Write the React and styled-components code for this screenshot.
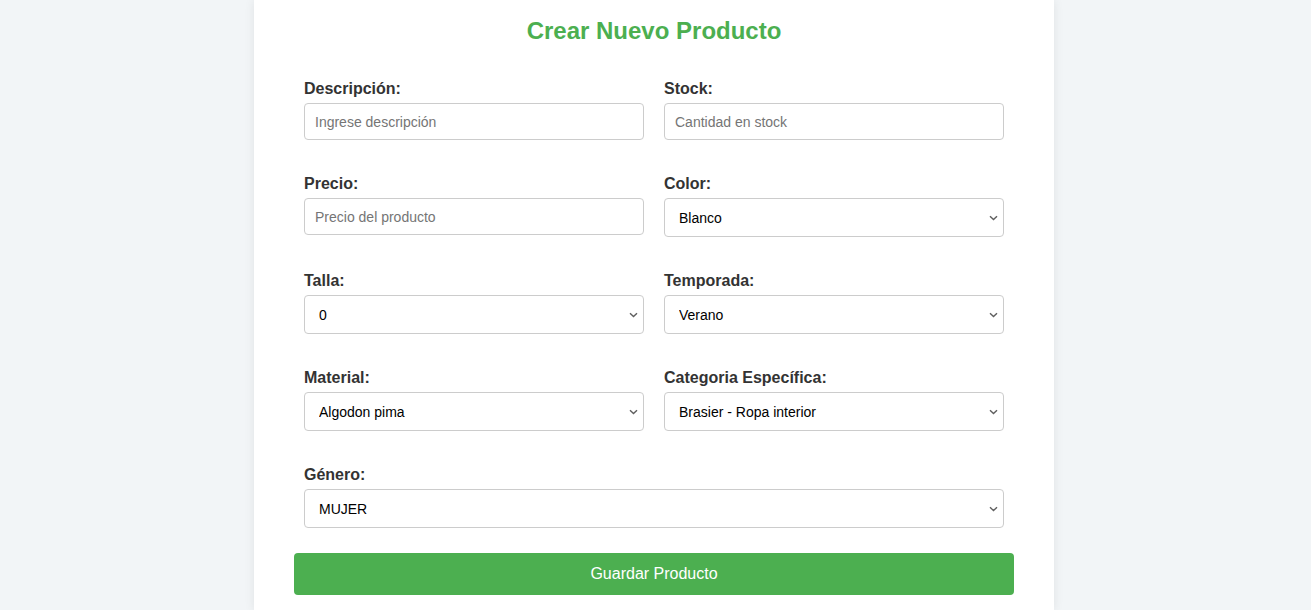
import React, { useState } from 'react';
import styled, { createGlobalStyle } from 'styled-components';

const GlobalStyle = createGlobalStyle`
  html, body {
    margin: 0;
    padding: 0;
    height: 100%;
    overflow: hidden;
    background: #f2f5f7;
    font-family: "Liberation Sans", Arial, sans-serif;
  }
`;

const Page = styled.div`
  display: flex;
  justify-content: center;
  min-height: 100vh;
  padding-right: 3px;
`;

const Card = styled.div`
  width: 800px;
  box-sizing: border-box;
  background: #ffffff;
  padding: 17px 40px 16px;
  box-shadow: 0 0 10px rgba(0, 0, 0, 0.08);
`;

const Title = styled.h2`
  margin: 0 0 35px;
  text-align: center;
  font-size: 24px;
  font-weight: bold;
  color: #4caf50;
`;

const Form = styled.form`
  display: flex;
  flex-direction: column;
`;

const Grid = styled.div`
  display: grid;
  grid-template-columns: 1fr 1fr;
  column-gap: 20px;
  row-gap: 35px;
  padding: 0 10px;
`;

const Group = styled.div`
  display: flex;
  flex-direction: column;
  grid-column: ${({ $full }) => ($full ? '1 / -1' : 'auto')};
`;

const Label = styled.label`
  display: block;
  font-size: 16px;
  font-weight: bold;
  color: #333;
  margin-bottom: 5px;
`;

const Input = styled.input`
  box-sizing: border-box;
  height: 37px;
  padding: 0 10px;
  border: 1px solid #ccc;
  border-radius: 4px;
  font-family: "Liberation Sans", Arial, sans-serif;
  font-size: 14px;
  color: #000;
  outline: none;

  &::placeholder {
    color: #757575;
  }
`;

const SelectWrap = styled.div`
  position: relative;
  display: flex;
`;

const Select = styled.select`
  flex: 1;
  box-sizing: border-box;
  height: 39px;
  padding: 0 24px 0 14px;
  border: 1px solid #ccc;
  border-radius: 4px;
  background: #fff;
  appearance: none;
  -webkit-appearance: none;
  font-family: "Liberation Sans", Arial, sans-serif;
  font-size: 14px;
  color: #000;
  outline: none;
`;

const Chevron = styled.svg`
  position: absolute;
  right: 6px;
  top: 50%;
  width: 9px;
  height: 6px;
  margin-top: -3px;
  pointer-events: none;
`;

const Button = styled.button`
  margin-top: 25px;
  height: 42px;
  border: none;
  border-radius: 4px;
  background: #4caf50;
  color: #fff;
  font-family: "Liberation Sans", Arial, sans-serif;
  font-size: 16px;
  cursor: pointer;
`;

const fields = [
  { name: 'descripcion', label: 'Descripción:', placeholder: 'Ingrese descripción' },
  { name: 'stock', label: 'Stock:', placeholder: 'Cantidad en stock' },
  { name: 'precio', label: 'Precio:', placeholder: 'Precio del producto' },
  { name: 'color', label: 'Color:', options: ['Blanco', 'Negro', 'Rojo', 'Azul'] },
  { name: 'talla', label: 'Talla:', options: ['0', '2', '4', '6', '8'] },
  { name: 'temporada', label: 'Temporada:', options: ['Verano', 'Invierno', 'Otoño', 'Primavera'] },
  { name: 'material', label: 'Material:', options: ['Algodon pima', 'Poliéster', 'Lino'] },
  { name: 'categoria', label: 'Categoria Específica:', options: ['Brasier - Ropa interior', 'Polo - Ropa casual'] },
  { name: 'genero', label: 'Género:', options: ['MUJER', 'HOMBRE', 'UNISEX'], full: true },
];

const App = () => {
  const [values, setValues] = useState({});

  const handleChange = (e) => {
    setValues({ ...values, [e.target.name]: e.target.value });
  };

  return (
    <>
      <GlobalStyle />
      <Page>
        <Card>
          <Title>Crear Nuevo Producto</Title>
          <Form onSubmit={(e) => e.preventDefault()}>
            <Grid>
              {fields.map((f) => (
                <Group key={f.name} $full={f.full}>
                  <Label htmlFor={f.name}>{f.label}</Label>
                  {f.options ? (
                    <SelectWrap>
                      <Select id={f.name} name={f.name} value={values[f.name] || f.options[0]} onChange={handleChange}>
                        {f.options.map((o) => (
                          <option key={o} value={o}>{o}</option>
                        ))}
                      </Select>
                      <Chevron viewBox="0 0 9 6">
                        <path d="M1 1.2 L4.5 4.6 L8 1.2" fill="none" stroke="#5f5f5f" strokeWidth="1.4" />
                      </Chevron>
                    </SelectWrap>
                  ) : (
                    <Input
                      id={f.name}
                      name={f.name}
                      placeholder={f.placeholder}
                      value={values[f.name] || ''}
                      onChange={handleChange}
                    />
                  )}
                </Group>
              ))}
            </Grid>
            <Button type="submit">Guardar Producto</Button>
          </Form>
        </Card>
      </Page>
    </>
  );
};

export default App;
